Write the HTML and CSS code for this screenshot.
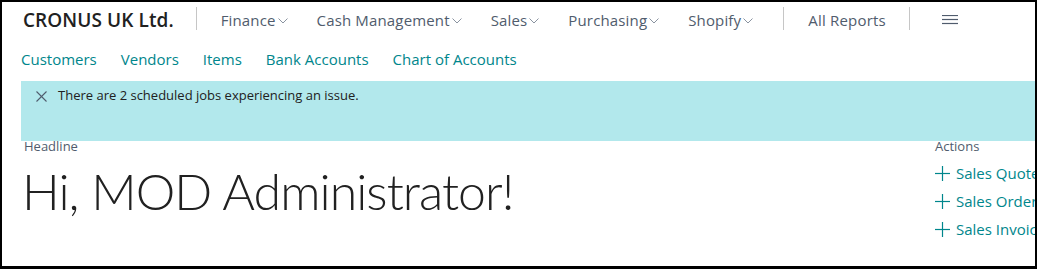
FILE: index.html
```html
<!DOCTYPE html>
<html>
<head>
<meta charset="utf-8">
<link rel="stylesheet" href="styles.css">
</head>
<body>
<div class="frame">
  <header class="topbar">
    <div class="company">CRONUS UK Ltd.</div>
    <span class="sep sep-first"></span>
    <nav class="menu">
      <span class="mitem">Finance<svg class="chev" viewBox="0 0 10 6"><polyline points="0.5,0.5 5,5 9.5,0.5"/></svg></span>
      <span class="mitem">Cash Management<svg class="chev" viewBox="0 0 10 6"><polyline points="0.5,0.5 5,5 9.5,0.5"/></svg></span>
      <span class="mitem">Sales<svg class="chev" viewBox="0 0 10 6"><polyline points="0.5,0.5 5,5 9.5,0.5"/></svg></span>
      <span class="mitem">Purchasing<svg class="chev" viewBox="0 0 10 6"><polyline points="0.5,0.5 5,5 9.5,0.5"/></svg></span>
      <span class="mitem">Shopify<svg class="chev" viewBox="0 0 10 6"><polyline points="0.5,0.5 5,5 9.5,0.5"/></svg></span>
    </nav>
    <span class="sep sep-menu"></span>
    <span class="mitem reports">All Reports</span>
    <span class="sep sep-reports"></span>
    <svg class="burger" viewBox="0 0 16 10"><line x1="0" y1="0.5" x2="16" y2="0.5"/><line x1="0" y1="4.5" x2="16" y2="4.5"/><line x1="0" y1="8.5" x2="16" y2="8.5"/></svg>
  </header>
  <nav class="links">
    <a class="link">Customers</a>
    <a class="link">Vendors</a>
    <a class="link">Items</a>
    <a class="link">Bank Accounts</a>
    <a class="link">Chart of Accounts</a>
  </nav>
  <div class="banner">
    <svg class="close" viewBox="0 0 11 11"><line x1="0.5" y1="0.5" x2="10.5" y2="10.5"/><line x1="10.5" y1="0.5" x2="0.5" y2="10.5"/></svg>
    <span class="msg">There are 2 scheduled jobs experiencing an issue.</span>
  </div>
  <main class="main">
    <section class="headline">
      <div class="caption">Headline</div>
      <h1 class="greeting">Hi, MOD Administrator!</h1>
    </section>
    <section class="actions">
      <div class="caption">Actions</div>
      <div class="action-list">
        <a class="action"><svg class="plus" viewBox="0 0 15 15"><line x1="7.5" y1="0" x2="7.5" y2="15"/><line x1="0" y1="7.5" x2="15" y2="7.5"/></svg>Sales Quote</a>
        <a class="action"><svg class="plus" viewBox="0 0 15 15"><line x1="7.5" y1="0" x2="7.5" y2="15"/><line x1="0" y1="7.5" x2="15" y2="7.5"/></svg>Sales Order</a>
        <a class="action"><svg class="plus" viewBox="0 0 15 15"><line x1="7.5" y1="0" x2="7.5" y2="15"/><line x1="0" y1="7.5" x2="15" y2="7.5"/></svg>Sales Invoice</a>
      </div>
    </section>
  </main>
</div>
</body>
</html>
```

FILE: styles.css
```css
html, body {
  margin: 0;
  padding: 0;
  background: #fff;
}
body {
  font-family: "Open Sans", "Noto Sans", sans-serif;
  color: #212121;
}
.frame {
  width: 1037px;
  height: 269px;
  box-sizing: border-box;
  border: 2px solid #000;
  border-bottom-width: 3px;
  overflow: hidden;
  padding-left: 19px;
}
.topbar {
  display: flex;
  align-items: center;
  height: 36px;
  white-space: nowrap;
}
.company {
  font-size: 19px;
  font-weight: 600;
  color: #212121;
  margin-left: 2px;
  letter-spacing: 0.08px;
}
.sep {
  width: 1px;
  height: 23px;
  background: #c6c6c6;
  margin: 5px 24px 0 24px;
  align-self: flex-start;
}
.sep-first {
  margin-left: 22px;
}
.sep-menu {
  margin-left: 30px;
}
.sep-reports {
  margin-left: 23px;
}
.menu {
  display: flex;
  gap: 29px;
}
.mitem {
  font-size: 15px;
  color: #505c6d;
  display: inline-flex;
  align-items: center;
  letter-spacing: 0.15px;
}
.reports {
  letter-spacing: 0.2px;
}
.chev {
  width: 10px;
  height: 6px;
  margin-left: 2px;
  margin-top: 2px;
  fill: none;
  stroke: #8a93a0;
  stroke-width: 1;
}
.burger {
  width: 16px;
  height: 10px;
  margin-left: 8px;
  stroke: #505c6d;
  stroke-width: 1.2;
}
.links {
  display: flex;
  gap: 24px;
  height: 43px;
  padding-bottom: 1px;
  box-sizing: border-box;
  align-items: center;
  white-space: nowrap;
}
.link {
  font-size: 15px;
  color: #00868c;
}
.banner {
  background: #b2e8ec;
  height: 60px;
  display: flex;
  align-items: flex-start;
  padding: 5px 0 0 15px;
  box-sizing: border-box;
  margin-right: -20px;
}
.close {
  width: 11px;
  height: 11px;
  flex-shrink: 0;
  margin-top: 5px;
  stroke: #505c6d;
  stroke-width: 1.1;
}
.msg {
  font-size: 13px;
  color: #212121;
  margin-left: 11px;
}
.main {
  display: flex;
  white-space: nowrap;
}
.headline {
  flex: 1;
  padding-left: 3px;
}
.caption {
  font-size: 13px;
  color: #505c6d;
  line-height: 16px;
  margin-top: -3px;
}
.greeting {
  margin: 7px 0 0 -2px;
  font-family: "Lato", "Open Sans", sans-serif;
  font-size: 50px;
  font-weight: 300;
  line-height: 60px;
  color: #212121;
  letter-spacing: -0.95px;
}
.actions {
  width: 100px;
  flex: 0 0 100px;
}
.action-list {
  margin-top: 5px;
}
.action {
  display: flex;
  align-items: center;
  height: 28px;
  font-size: 15px;
  color: #00868c;
}
.plus {
  width: 15px;
  height: 15px;
  flex-shrink: 0;
  stroke: #00868c;
  stroke-width: 1.2;
  margin-right: 6px;
}
```
